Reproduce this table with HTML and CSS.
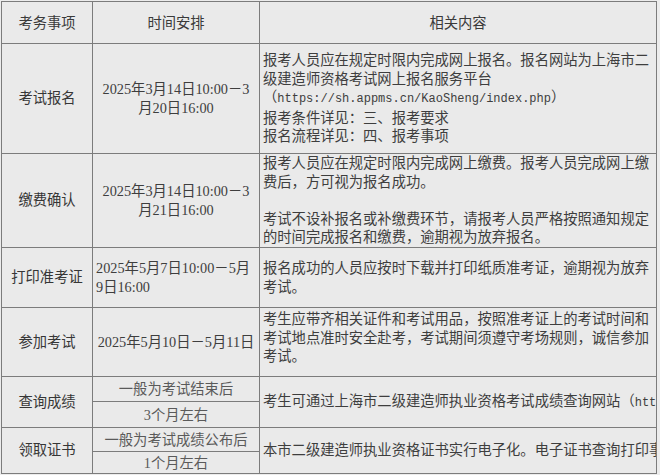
FILE: index.html
```html
<!DOCTYPE html>
<html lang="zh-CN">
<head>
<meta charset="utf-8">
<title>考务安排</title>
<link rel="stylesheet" href="styles.css">
</head>
<body>
<table class="schedule">
  <colgroup>
    <col class="col-item">
    <col class="col-time">
    <col class="col-content">
  </colgroup>
  <thead>
    <tr class="row-head">
      <th>考务事项</th>
      <th>时间安排</th>
      <th>相关内容</th>
    </tr>
  </thead>
  <tbody>
    <tr class="row-1">
      <td class="item">考试报名</td>
      <td class="time">2025年3月14日10:00－3<br>月20日16:00</td>
      <td class="content">报考人员应在规定时限内完成网上报名。报名网站为上海市二<br>级建造师资格考试网上报名服务平台<br>（<span class="url">https://sh.appms.cn/KaoSheng/index.php</span>）<br>报考条件详见：三、报考要求<br>报名流程详见：四、报考事项</td>
    </tr>
    <tr class="row-2">
      <td class="item">缴费确认</td>
      <td class="time">2025年3月14日10:00－3<br>月21日16:00</td>
      <td class="content">报考人员应在规定时限内完成网上缴费。报考人员完成网上缴<br>费后，方可视为报名成功。<br><br>考试不设补报名或补缴费环节，请报考人员严格按照通知规定<br>的时间完成报名和缴费，逾期视为放弃报名。</td>
    </tr>
    <tr class="row-3">
      <td class="item">打印准考证</td>
      <td class="time left">2025年5月7日10:00－5月<br>9日16:00</td>
      <td class="content">报名成功的人员应按时下载并打印纸质准考证，逾期视为放弃<br>考试。</td>
    </tr>
    <tr class="row-4">
      <td class="item">参加考试</td>
      <td class="time">2025年5月10日－5月11日</td>
      <td class="content top">考生应带齐相关证件和考试用品，按照准考证上的考试时间和<br>考试地点准时安全赴考，考试期间须遵守考场规则，诚信参加<br>考试。</td>
    </tr>
    <tr class="row-5a">
      <td class="item" rowspan="2">查询成绩</td>
      <td class="time sub">一般为考试结束后</td>
      <td class="content clip" rowspan="2">考生可通过上海市二级建造师执业资格考试成绩查询网站（<span class="url">http</span></td>
    </tr>
    <tr class="row-5b">
      <td class="time sub">3个月左右</td>
    </tr>
    <tr class="row-6a">
      <td class="item" rowspan="2">领取证书</td>
      <td class="time sub">一般为考试成绩公布后</td>
      <td class="content clip" rowspan="2">本市二级建造师执业资格证书实行电子化。电子证书查询打印事</td>
    </tr>
    <tr class="row-6b">
      <td class="time sub">1个月左右</td>
    </tr>
  </tbody>
</table>
</body>
</html>
```

FILE: styles.css
```css
html, body {
  margin: 0;
  background: #ececec;
}

body {
  padding: 1px 0 0 1px;
  font-family: "Liberation Serif", "Noto Sans CJK SC", serif;
  font-size: 14.3px;
  line-height: 18.4px;
  color: #3e3e3e;
}

.schedule {
  border-collapse: collapse;
  table-layout: fixed;
  width: 655px;
  background: #eaeaea;
}

.col-item { width: 91px; }
.col-time { width: 167px; }
.col-content { width: 397px; }

.schedule th,
.schedule td {
  border: 1px solid #7c7c7c;
  padding: 0 3px;
  vertical-align: middle;
}

.schedule th {
  font-weight: normal;
  text-align: center;
  color: #3a3a3a;
  padding-top: 2px;
}

.row-head { height: 42px; }
.row-1 { height: 110px; }
.row-2 { height: 94px; }
.row-3 { height: 60px; }
.row-4 { height: 69px; }
.row-5a { height: 25px; }
.row-5b { height: 26px; }
.row-6a { height: 24px; }
.row-6b { height: 22px; }

.item {
  text-align: center;
  color: #363636;
}

.time {
  text-align: center;
  line-height: 19px;
}

.time.left {
  text-align: left;
}

.time.sub {
  color: #5a5a5a;
  line-height: 18px;
}

.content {
  text-align: left;
}

.content.top {
  padding-bottom: 8px;
}

.content.clip {
  white-space: nowrap;
  overflow: hidden;
}

.url {
  font-family: "Liberation Mono", monospace;
  font-size: 12px;
}
```
